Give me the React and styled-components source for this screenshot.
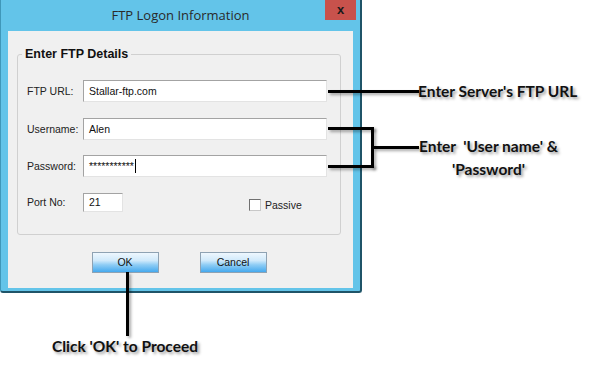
import React from "react";
import styled, { createGlobalStyle } from "styled-components";

const GlobalStyle = createGlobalStyle`
  html, body {
    margin: 0;
    padding: 0;
    background: #fff;
  }
  body {
    font-family: "Liberation Sans", Arial, sans-serif;
  }
`;

const Page = styled.div`
  position: relative;
  width: 590px;
  height: 371px;
  overflow: hidden;
  background: #fff;
`;

const Window = styled.div`
  width: 362px;
  height: 293px;
  box-sizing: border-box;
  background: #63c4e9;
  border-left: 1px solid #3f97b9;
  border-right: 2px solid #1f5468;
  border-bottom: 2px solid #1f5468;
  border-radius: 0 0 3px 3px;
  display: flex;
  flex-direction: column;
`;

const TitleBar = styled.div`
  height: 31px;
  flex-shrink: 0;
  display: grid;
  grid-template-columns: 37px 1fr 37px;
  & .title {
    grid-column: 2;
    align-self: center;
    text-align: center;
    font-family: "Open Sans", "Liberation Sans", sans-serif;
    font-size: 13px;
    color: #2a2a2a;
    padding-bottom: 1px;
  }
`;

const CloseButton = styled.div`
  grid-column: 3;
  justify-self: end;
  margin-right: 4px;
  width: 31px;
  height: 20px;
  background: #c8524c;
  display: flex;
  align-items: center;
  justify-content: center;
  font-family: "Liberation Sans", sans-serif;
  font-weight: bold;
  font-size: 13px;
  color: #1a1a1a;
  line-height: 1;
  padding-bottom: 2px;
  box-sizing: border-box;
`;

const Client = styled.div`
  flex: 1;
  margin: 0 7px 3px 7px;
  background: #f0f0f0;
  padding: 16px 12px 0 9px;
  display: flex;
  flex-direction: column;
`;

const GroupBox = styled.fieldset`
  margin: 0;
  padding: 0 13px 22px 9px;
  border: 1px solid #d0d0d0;
  border-radius: 3px;
  min-width: 0;
  & legend {
    margin-left: -5px;
    padding: 0 3px;
    font-weight: bold;
    font-size: 12.5px;
    line-height: 15px;
    color: #111;
  }
`;

const Form = styled.div`
  display: flex;
  flex-direction: column;
  gap: 15.5px;
  margin-top: 18px;
`;

const Row = styled.div`
  display: flex;
  align-items: center;
  height: ${(p) => (p.$short ? 19 : 22)}px;
`;

const Label = styled.span`
  width: 56px;
  flex-shrink: 0;
  font-size: 10.5px;
  color: #222;
`;

const Field = styled.div`
  ${(p) => (p.$width ? `width: ${p.$width}px;` : "flex: 1;")}
  height: 100%;
  box-sizing: border-box;
  background: #fff;
  border-top: 1px solid #a3a3a3;
  border-left: 1px solid #a3a3a3;
  border-right: 1px solid #e3e3e3;
  border-bottom: 1px solid #e3e3e3;
  padding-left: 5px;
  display: flex;
  align-items: center;
  font-size: 10.5px;
  color: #111;
  white-space: pre;
`;

const Caret = styled.span`
  width: 1px;
  height: 14px;
  background: #000;
  margin-left: 1px;
`;

const CheckGroup = styled.label`
  display: flex;
  align-items: center;
  margin-left: 126px;
  margin-top: 6px;
  font-size: 10.5px;
  color: #222;
`;

const CheckBox = styled.span`
  width: 12px;
  height: 12px;
  box-sizing: border-box;
  background: #fff;
  border-top: 1px solid #707070;
  border-left: 1px solid #707070;
  border-right: 1px solid #c8c8c8;
  border-bottom: 1px solid #c8c8c8;
  margin-right: 4px;
`;

const ButtonRow = styled.div`
  display: flex;
  justify-content: center;
  gap: 41px;
  margin-top: 17px;
`;

const Button = styled.div`
  width: 67px;
  height: 21px;
  box-sizing: border-box;
  border: 1px solid #8ea2b3;
  background: linear-gradient(
    to bottom,
    #eef7fe 0%,
    #cfe9fb 40%,
    #8fcdf5 62%,
    #45a9ee 100%
  );
  display: flex;
  align-items: center;
  justify-content: center;
  font-size: 10.5px;
  color: #111;
`;

const Line = styled.div`
  position: absolute;
  left: ${(p) => p.$x}px;
  top: ${(p) => p.$y}px;
  width: ${(p) => p.$w}px;
  height: ${(p) => p.$h}px;
  background: #000;
  box-shadow: 2px 2px 3px rgba(0, 0, 0, 0.35);
`;

const Callout = styled.div`
  position: absolute;
  left: ${(p) => p.$x}px;
  top: ${(p) => p.$y}px;
  text-align: center;
  font-family: "Lato", "Liberation Sans", sans-serif;
  font-weight: bold;
  font-size: 15.5px;
  line-height: 23px;
  color: #111;
  white-space: pre;
  text-shadow: 2px 2px 3px rgba(0, 0, 0, 0.4);
`;

export default function App() {
  return (
    <Page>
      <GlobalStyle />
      <Window>
        <TitleBar>
          <div className="title">FTP Logon Information</div>
          <CloseButton>x</CloseButton>
        </TitleBar>
        <Client>
          <GroupBox>
            <legend>Enter FTP Details</legend>
            <Form>
              <Row>
                <Label>FTP URL:</Label>
                <Field>Stallar-ftp.com</Field>
              </Row>
              <Row>
                <Label>Username:</Label>
                <Field>Alen</Field>
              </Row>
              <Row>
                <Label>Password:</Label>
                <Field>
                  ***********
                  <Caret />
                </Field>
              </Row>
              <Row $short>
                <Label>Port No:</Label>
                <Field $width={40}>21</Field>
                <CheckGroup>
                  <CheckBox />
                  Passive
                </CheckGroup>
              </Row>
            </Form>
          </GroupBox>
          <ButtonRow>
            <Button>OK</Button>
            <Button>Cancel</Button>
          </ButtonRow>
        </Client>
      </Window>

      <Line $x={328} $y={90} $w={91} $h={3} />
      <Callout $x={418} $y={80}>Enter Server's FTP URL</Callout>

      <Line $x={328} $y={127} $w={46} $h={3} />
      <Line $x={328} $y={165} $w={46} $h={3} />
      <Line $x={371} $y={127} $w={3} $h={41} />
      <Line $x={373} $y={146} $w={46} $h={3} />
      <Callout $x={419} $y={135}>
        {"Enter  'User name' &\n'Password'"}
      </Callout>

      <Line $x={126} $y={272} $w={3} $h={64} />
      <Callout $x={52} $y={335}>Click 'OK' to Proceed</Callout>
    </Page>
  );
}
